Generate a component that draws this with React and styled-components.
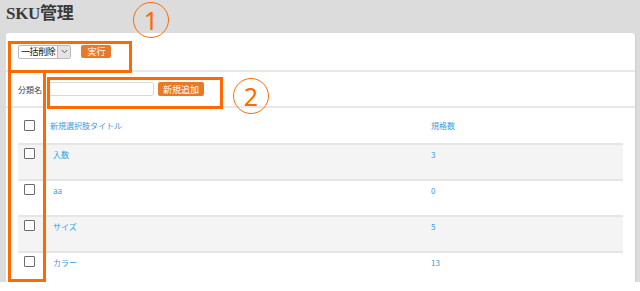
import React from "react";
import styled, { createGlobalStyle } from "styled-components";

const Global = createGlobalStyle`
  html, body { margin: 0; padding: 0; background: #ffffff; }
  body { font-family: "Noto Sans CJK JP", "Noto Sans", sans-serif; color: #333; }
  * { box-sizing: border-box; }
`;

const Page = styled.div`
  position: relative;
  width: 640px;
  height: 282px;
  background: #dcdcdc;
  padding: 0 5px 0 6px;
  display: flex;
  flex-direction: column;
  overflow: hidden;
`;

const Title = styled.h1`
  margin: 0;
  flex: 0 0 33px;
  padding: 4px 0 0 0;
  font-family: "Liberation Serif", "Noto Sans CJK JP", serif;
  font-weight: bold;
  font-size: 17px;
  line-height: 20px;
  color: #3a3a3a;
  letter-spacing: -0.3px;
`;

const Panel = styled.div`
  flex: 1 1 auto;
  min-height: 0;
  overflow: hidden;
  background: #fff;
  border-radius: 3px 3px 0 0;
  box-shadow: 1px 0 1px rgba(0,0,0,0.06);
  display: flex;
  flex-direction: column;
`;

const Bar = styled.div`
  flex: 0 0 ${p => p.$h}px;
  border-bottom: 2px solid #e8e8e8;
  padding: 0 12px;
  display: flex;
  align-items: center;
  gap: ${p => p.$gap || 0}px;
`;

const Select = styled.div`
  display: flex;
  align-items: stretch;
  flex-shrink: 0;
  height: 14px;
  border: 1px solid #bbb;
  border-radius: 2px;
  font-size: 9px;
  color: #111;
  background: #fff;
`;

const SelectText = styled.span`
  padding: 0 2px 0 2px;
  line-height: 12px;
  white-space: nowrap;
  letter-spacing: -0.4px;
`;

const SelectArrow = styled.span`
  width: 13px;
  background: #e4e4e4;
  border-left: 1px solid #bbb;
  display: flex;
  align-items: center;
  justify-content: center;
`;

const OrangeButton = styled.button`
  flex-shrink: 0;
  height: ${p => p.$h || 13}px;
  padding: 0 ${p => p.$px || 5}px;
  border: none;
  border-radius: 2px;
  background: #e8792a;
  color: #fff;
  font-family: "Noto Sans CJK JP", sans-serif;
  font-size: 9px;
  line-height: 13px;
  white-space: nowrap;
  margin-left: ${p => p.$ml || 0}px;
`;

const Label = styled.span`
  flex: 0 0 30px;
  font-size: 8px;
  color: #444;
  white-space: nowrap;
`;

const Input = styled.div`
  flex: 0 0 106px;
  height: 14px;
  border: 1px solid #d8d8d8;
  border-radius: 3px;
  background: #fff;
`;

const Table = styled.div`
  margin: 0 12px;
  display: flex;
  flex-direction: column;
`;

const Row = styled.div`
  display: grid;
  grid-template-columns: 32px 381px 1fr;
  flex: 0 0 ${p => p.$h || 36}px;
  background: ${p => (p.$alt ? "#f4f4f4" : "#fff")};
  border-top: ${p => (p.$top ? "2px solid #e6e6e6" : "none")};
  align-items: ${p => (p.$center ? "center" : "start")};
`;

const Cell = styled.div`
  padding-left: ${p => p.$pl || 0}px;
  padding-top: ${p => p.$pt || 0}px;
  font-size: 8px;
  line-height: 11px;
  color: #3d9be0;
  white-space: nowrap;
`;

const Check = styled.span`
  display: block;
  width: 11px;
  height: 11px;
  margin-left: 6px;
  margin-top: ${p => p.$mt || 0}px;
  border: 1.5px solid #6b6b6b;
  border-radius: 1px;
  background: #fff;
`;

const Mark = styled.div`
  position: absolute;
  left: ${p => p.$x}px;
  top: ${p => p.$y}px;
  width: ${p => p.$w}px;
  height: ${p => p.$h}px;
  border: 3px solid #ff6a00;
  pointer-events: none;
`;

const Circle = styled.div`
  position: absolute;
  left: ${p => p.$x}px;
  top: ${p => p.$y}px;
  width: 36px;
  height: 36px;
  border: 1.6px solid #ff6a00;
  border-radius: 50%;
  display: flex;
  align-items: center;
  justify-content: center;
  color: #ff6a00;
  font-family: "Noto Sans", "Liberation Sans", sans-serif;
  font-size: 25px;
  font-weight: 400;
  line-height: 1;
`;

const rows = [
  { name: "入数", count: "3" },
  { name: "aa", count: "0" },
  { name: "サイズ", count: "5" },
  { name: "カラー", count: "13" },
];

export default function App() {
  return (
    <>
      <Global />
      <Page>
        <Title>SKU管理</Title>
        <Panel>
          <Bar $h={39} $gap={10}>
            <Select>
              <SelectText>一括削除</SelectText>
              <SelectArrow>
                <svg width="7" height="5" viewBox="0 0 7 5">
                  <path d="M0.8 1 L3.5 3.8 L6.2 1" fill="none" stroke="#666" strokeWidth="1" />
                </svg>
              </SelectArrow>
            </Select>
            <OrangeButton $px={6}>実行</OrangeButton>
          </Bar>
          <Bar $h={36}>
            <Label>分類名</Label>
            <Input />
            <OrangeButton $h={14} $px={5} $ml={4}>新規追加</OrangeButton>
          </Bar>
          <Table>
            <Row $h={35} $center>
              <Check />
              <Cell>新規選択肢タイトル</Cell>
              <Cell>規格数</Cell>
            </Row>
            {rows.map((r, i) => (
              <Row key={r.name} $top $alt={i % 2 === 0}>
                <Check $mt={3} />
                <Cell $pl={3} $pt={4}>{r.name}</Cell>
                <Cell $pt={4}>{r.count}</Cell>
              </Row>
            ))}
          </Table>
        </Panel>
        <Mark $x={8} $y={41} $w={124} $h={32} />
        <Mark $x={8} $y={70} $w={38} $h={212} />
        <Mark $x={47} $y={77} $w={176} $h={32} />
        <Circle $x={133} $y={2}>1</Circle>
        <Circle $x={233} $y={78}>2</Circle>
      </Page>
    </>
  );
}
